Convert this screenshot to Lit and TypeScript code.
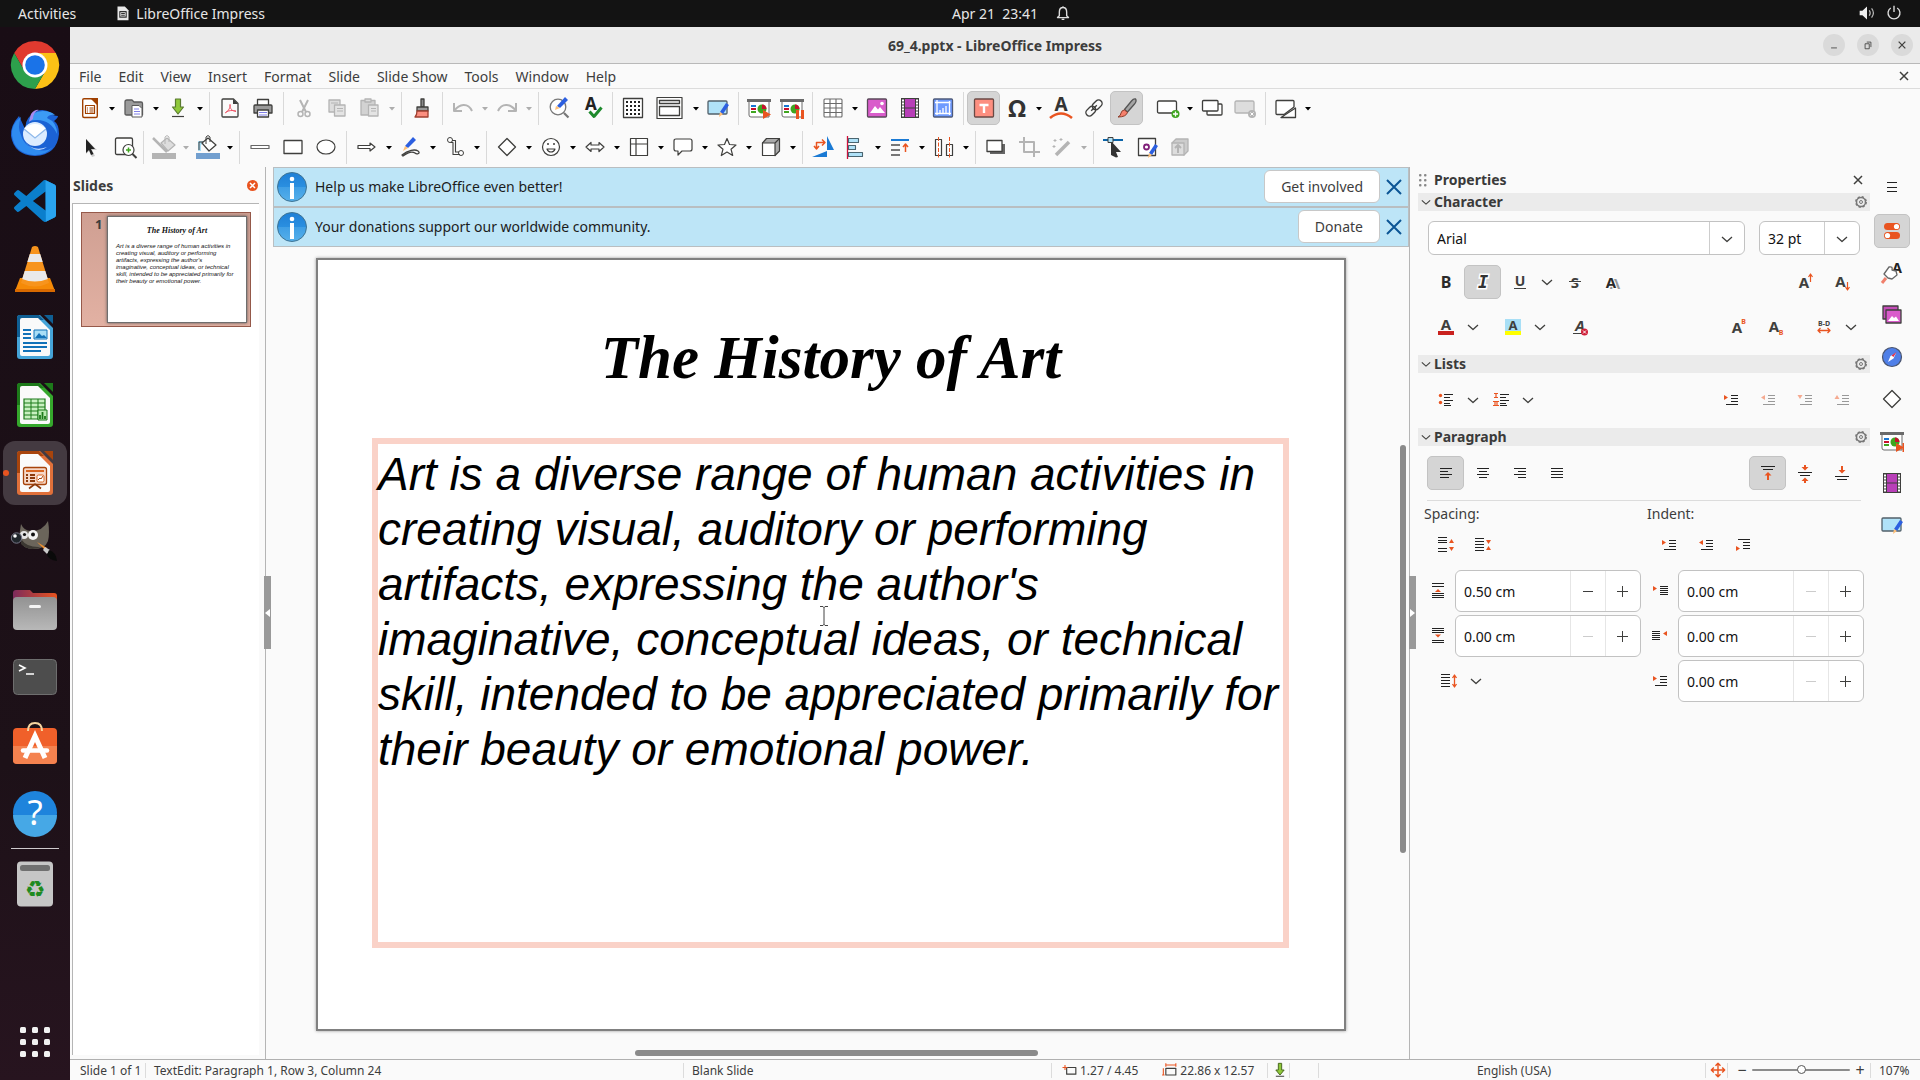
import { LitElement, html, svg, css, nothing } from "lit";
import { customElement, property } from "lit/decorators.js";
import { classMap } from "lit/directives/class-map.js";

const D = "#3f3f3d";
const G = "#b4b4b4";
const O = "#e95420";

const stroke = (d: string, c = D, f = "none", w = 1.3) =>
  svg`<path d=${d} stroke=${c} fill=${f} stroke-width=${w} stroke-linejoin="round"/>`;
const fill = (d: string, c = D) => svg`<path d=${d} fill=${c}/>`;
const glyph = (s: string, x: number, y: number, size: number, c = D, style = "") =>
  svg`<text x=${x} y=${y} font-size=${size} fill=${c} text-anchor="middle" font-weight="bold" font-style=${style || "normal"} font-family="Noto Sans, sans-serif">${s}</text>`;
const lines = (ys: number[], x1: number, x2: number, c = "#222") =>
  svg`${ys.map((y) => svg`<path d=${`M${x1} ${y}H${x2}`} stroke=${c} stroke-width="1"/>`)}`;
const pencil = (x: number, y: number) =>
  svg`<g transform=${`translate(${x} ${y})`}>${fill("M8 0l3 2-6 9-3-2z", "#2c5fe0")}${fill("M2 9l3 2-4 3z", "#ffc078")}</g>`;
const board = svg`${fill("M0 3h24v3H0z", "#6a6a6a")}${stroke("M2 6v13q0 2 2 2h18V6", "#6a6a6a", "#fff", 1)}
  ${fill("M4 9h5v2H4z", "#1976d2")}${fill("M4 12h5v2H4z", "#c8102e")}${fill("M4 15h5v2H4z", "#3fa51f")}
  <circle cx="15" cy="13" r="4.5" fill="#3fa51f"/>${fill("M15 13V8.500a4.500 4.500 0 0 1 4.500 4.500z", "#c8102e")}`;
const film = svg`${fill("M3 2h18v20H3z", D)}${fill("M7 3h10v8.500H7zM7 12.500h10V21H7z", "#b83fb8")}
  ${[3.5, 6.5, 9.5, 12.5, 15.5, 18.5].map((y) => svg`<path d=${`M4 ${y}h2v2H4zM18 ${y}h2v2h-2z`} fill="#fff"/>`)}`;
const bucket = (c: string, f: string) => svg`${stroke("M6 8l6-5 8 7-7 6z", c, f, 1.2)}${stroke("M10 9V2q2-3 4 0v5", c, "none", 1)}`;
const indent = (tri: string, c = "#222", t = O) => svg`${lines([7.5, 10.500, 13.5], 12, 19, c)}${lines([16.5], 7, 19, c)}${fill(tri, t)}`;

const ICONS: Record<string, unknown> = {
  newdoc: svg`${stroke("M6 2.700h9l4.300 5V20q0 1.500-1.500 1.500H6.200Q4.700 21.500 4.700 20V4q0-1.300 1.300-1.300z", "#a04000", "#fff", 1.400)}${fill("M12 2h8v8z", "#a04000")}${stroke("M7.500 9.500h9v8h-9z", "#a04000", "#fff", 1.200)}${stroke("M9 12h1M11.500 12h4M9 14h1M11.500 14h4M9 16h1M11.500 16h4", "#a04000", "none", 1)}`,
  open: svg`${stroke("M3 6q0-2 2-2h5l2 2h7q1.500 0 1.500 1.500V19H4.500Q3 19 3 17.500z", "#5a5a5a", "#9a9a9a")}${stroke("M10 9.500h7l3 3V21H10z", "#5a5a5a", "#fff", 1)}${stroke("M12 13h5M12 15.500h6M12 18h6", "#8080e8", "none", 1)}`,
  save: svg`${stroke("M9.500 3h5v8h3L12 18 6.500 11h3z", "#5a7a30", "#8fc93a", 1.200)}${stroke("M6 20.500h12", D, "none", 1.200)}`,
  savestate: svg`${stroke("M10 4h4v8h3L12 18 7 12h3z", "#4a6a20", "#8fc93a", 1.200)}${stroke("M7 19.500h10", D, "none", 1.200)}`,
  pdf: svg`${stroke("M5.500 3h10L20 7.500V20q0 1-1 1H5q-1 0-1-1V4q0-1 1-1z")}${fill("M15 3l5 5h-5z")}${stroke("M7 17c4-2 5.500-6 5-9M12 9c0 4 2 6 6 6.500M8 16c3-1.500 6-2 10-1", "#ee5566", "none", 1)}`,
  print: svg`${stroke("M6.500 9V3.500h11V9", D, "#fff")}${stroke("M4 9h16q1 0 1 1v7H3v-7q0-1 1-1z", D, "#9a9a9a")}${stroke("M6.500 14h11v7h-11z", D, "#fff")}${stroke("M8 16.500h8M8 19h8", "#8080e8", "none", 1)}`,
  cut: svg`${stroke("M8 4l6 12M16 4l-6 12", G, "none", 2)}<circle cx="8.500" cy="18" r="2.500" fill="none" stroke=${G} stroke-width="1.500"/><circle cx="15.500" cy="18" r="2.500" fill="none" stroke=${G} stroke-width="1.500"/>`,
  copy: svg`${stroke("M4 4h11v12H4z", G, "#ddd")}${stroke("M9.500 9H20v11H9.500z", G, "#e4e4e4")}${stroke("M12 12.500h6M12 15h6M6 7h7", G, "none", 1)}`,
  paste: svg`${stroke("M3 4.500h14V19H3z", G, "#d2d2d2")}${stroke("M7 3h6v3H7z", G, "#ddd")}${stroke("M10.500 9H20v11h-9.500z", G, "#e4e4e4")}${stroke("M13 12.500h5M13 15h5", G, "none", 1)}`,
  clone: svg`${stroke("M11 3h3v8h-3z", D, "#8a8a8a")}${stroke("M7 11h11v4H7z", D, "#9a9a9a")}${stroke("M7 15h11v6H5q2-2 2-6z", "#a04030", "#fb8f80")}`,
  undo: svg`${stroke("M3 7v8h8M3.500 14.500C8 8 17 6 21 15", G, "none", 2)}`,
  redo: svg`${stroke("M21 7v8h-8M20.500 14.500C16 8 7 6 3 15", G, "none", 2)}`,
  find: svg`<circle cx="11" cy="11" r="7.800" fill="#fff" stroke="#777" stroke-width="1.300"/>${stroke("M17 17l4.500 4.500", "#777", "none", 2.200)}${fill("M18 1l3 3-8 8-3-2z", "#2c5fe0")}${fill("M9 10l4 2-5 2z", "#ffc078")}`,
  spell: svg`${glyph("A", 11, 14, 17, "#222")}${stroke("M9.500 15.500l4.500 5 7.500-9", "#1d8a2c", "none", 3)}`,
  grid: svg`${stroke("M2.500 2.500h19v19h-19z", D, "#fff")}${[6, 10, 14, 18].map((y) => [6, 10, 14, 18].map((x) => svg`<path d=${`M${x - 1} ${y - 1}h2v2h-2z`} fill="#222"/>`))}`,
  views: svg`${stroke("M-1 1.500h25v21H-1z", D, "#fff", 1.200)}${stroke("M1.500 4.500h20v3h-20zM1.500 10.500h20v9h-20z", D, "#fff")}`,
  master: svg`${stroke("M3 5h17q1 0 1 1v11q0 1-1 1H3q-1 0-1-1V6q0-1 1-1z", "#51606a", "#b0e2f8")}${pencil(12, 7)}`,
  play: svg`${board}${fill("M16 14l8 4.500-8 4.500z", O)}`,
  pause: svg`${board}${fill("M16 14h3v9h-3zM21 14h3v9h-3z", O)}`,
  table: svg`${stroke("M4 3h16q1 0 1 1v16q0 1-1 1H4q-1 0-1-1V4q0-1 1-1zM3 7.500h18M3 12h18M3 16.500h18M9 3v18M15 3v18", "#6a6a6a", "#fff", 1.100)}`,
  image: svg`${stroke("M3.500 3h17q1 0 1 1v16q0 1-1 1h-17q-1 0-1-1V4q0-1 1-1z", "#5a4a5a", "#d95ccb")}${fill("M5 17l5-7 3 3.500 2-2.500 5 6z", "#fff")}<circle cx="17" cy="7.500" r="1.800" fill="#fff"/>`,
  film,
  chart: svg`${stroke("M3.500 3h17q1 0 1 1v16q0 1-1 1h-17q-1 0-1-1V4q0-1 1-1z", "#4f5b7a", "#6f9bff")}${stroke("M6 4v15M4 6.500h15.500M4 17.500h16M18.500 5v14M9 17v-3M12 17v-5M15 17v-7", "#fff", "none", 1.300)}`,
  textbox: svg`${stroke("M3.500 3h17q1 0 1 1v16q0 1-1 1h-17q-1 0-1-1V4q0-1 1-1z", "#6a4a45", "#fd8f80")}${stroke("M7.500 9h9M12 9v8", "#fff", "none", 2.400)}`,
  omega: svg`${glyph("Ω", 12, 21, 24, "#333")}`,
  fontwork: svg`${glyph("A", 12, 15, 19, "#333")}${stroke("M1 22q11-9 22 0", O, "none", 2.600)}`,
  link: svg`<g transform="rotate(-45 12 12)"><rect x="2" y="8.500" width="11" height="7" rx="3.500" fill="none" stroke=${D} stroke-width="1.400"/><rect x="11" y="8.500" width="11" height="7" rx="3.500" fill="none" stroke=${D} stroke-width="1.400"/><path d="M8 12h8" stroke=${D} stroke-width="1.300"/></g>`,
  brush: svg`${stroke("M20.500 3q1.500 2-1 5l-7 8-3-2.500 7-8.500q2-2.500 4-2z", "#555", "#a5a5a5")}${stroke("M9.500 14l3 2.500Q11 21 3 21q3-1.500 3-4 .800-3 3.500-3z", "#8c3d2a", "#f5806c", 1)}`,
  newslide: svg`${stroke("M3 5h16q1.500 0 1.500 1.500v9q0 1.500-1.500 1.500H3q-1.500 0-1.500-1.500v-9Q1.500 5 3 5z", D, "#fff")}<circle cx="19.500" cy="18" r="4" fill="#3fa51f"/>${stroke("M17 18h5M19.500 15.500v5", "#fff", "none", 1.300)}`,
  dupslide: svg`${stroke("M8 8h13q1 0 1 1v9q0 1-1 1H8q-1 0-1-1V9q0-1 1-1z", D, "#fff")}${stroke("M3.500 4.500H17q1 0 1 1V14q0 1-1 1H3.500q-1 0-1-1V5.500q0-1 1-1z", D, "#fff")}`,
  delslide: svg`${stroke("M3.500 5h16q1.500 0 1.500 1.500v9q0 1.500-1.500 1.500h-16Q2 17 2 15.500v-9Q2 5 3.500 5z", G, "#ddd")}<circle cx="19" cy="18" r="4" fill=${G}/>${stroke("M17.500 16.500l3 3M20.500 16.500l-3 3", "#fff", "none", 1)}`,
  layout: svg`${stroke("M3 4.500h16q1 0 1 1V11l-10 7.500H3q-1 0-1-1V5.500q0-1 1-1z", D, "#fff")}${stroke("M7 21.500L21.500 12v9.500z", D, "#fff")}`,
  pointer: svg`${fill("M8 4l11 11h-5l3 6-3 1-3-6-3 3z", "#ccc")}${fill("M8 4l9 10h-4l2.500 5-2.500 1-2-5-3 3z", "#222")}`,
  zoom: svg`${stroke("M6 3h14q1.500 0 1.500 1.500V18q0 1.500-1.500 1.500H6Q4.500 19.500 4.500 18V4.500Q4.500 3 6 3z", D, "#fff")}<circle cx="17.500" cy="15" r="5.500" fill="#fff" stroke=${D} stroke-width="1.200"/>${stroke("M21.500 19l4 4", D, "none", 2)}${stroke("M15 15h5M17.500 12.500v5", "#3fa51f", "none", 1.500)}`,
  linecolor: svg`<g transform="translate(3 0)">${bucket(G, "#ddd")}</g>${stroke("M1 3l14 14", G, "none", 2.500)}${fill("M0 18h24v6H0z", G)}`,
  fillcolor: svg`${fill("M2 16V6h7l-4 4v6z", "#a8ddf4")}${stroke("M3 15V7h4", D, "none", 1)}${bucket(D, "#fff")}${fill("M0 18h24v6H0z", "#729fcf")}`,
  line: stroke("M3 10.500h18v3H3z", "#666", "#fff", 1.200),
  rect: stroke("M3.500 5.500h17q.500 0 .500.500v12.500H3V6q0-.500.500-.500z", D, "#fff"),
  ellipse: svg`<ellipse cx="12" cy="12" rx="9" ry="7" fill="#fff" stroke=${D} stroke-width="1.200"/>`,
  arrow: stroke("M3 10.500h12V8l5 4-5 4v-2.500H3z", D, "#fff", 1.200),
  freeline: svg`${fill("M14 2l3 3-8 8-3-2z", "#2c5fe0")}${fill("M6 11l3 2-5 3z", "#ffc078")}${stroke("M3 20c6-5 13-6 16-4s-1 4-3 2c-3-2-8 0-12 3z", D, "none", 1.300)}`,
  connector: svg`<circle cx="7" cy="5" r="2.500" fill="#fff" stroke=${D}/><circle cx="18" cy="18" r="2.500" fill="#fff" stroke=${D}/>${stroke("M9 5.500h3.500v11.500H16M7.500 7.500h2.500v12h7", D, "none", 1.100)}`,
  diamond: stroke("M12 3.500l8.500 8.500-8.500 8.500L3.500 12z", D, "#fff"),
  smiley: svg`<circle cx="12" cy="12" r="8.500" fill="#fff" stroke=${D} stroke-width="1.200"/><path d="M9 8v2M15 8v2" stroke=${D} stroke-width="1.500"/>${stroke("M8 14h8q-1 3-4 3t-4-3z", D, "none", 1.200)}`,
  dblarrow: stroke("M3 12l5-4.500V10h8V7.500l5 4.500-5 4.500V14H8v2.500z", D, "#fff", 1.200),
  flowchart: stroke("M3.500 3.500h17v17h-17zM3.500 9h17M9 3.500v17", D, "#fff", 1.200),
  callout: stroke("M5 4h14q2 0 2 2v8q0 2-2 2h-8l-4 4v-4H5q-2 0-2-2V6q0-2 2-2z", D, "#fff", 1.200),
  star: stroke("M12 3.500l2.500 6 6.500.500-5 4.200 1.700 6.300-5.700-3.500-5.700 3.500L8 14.200 3 10l6.500-.500z", D, "#fff", 1.200),
  cube: svg`${stroke("M3.500 8l4-4.500h13V16L16 20.500z", D, "#aaa", 1.200)}${stroke("M3.500 8H16v12.500H3.500zM16 8l4.500-4.500", D, "#fff", 1.200)}`,
  rotate: svg`${fill("M16 1l7 14h-7zM1 22l15-6v6z", "#1a7ad4")}${stroke("M5.500 13V7.500H13M11 4.500l3 3-3 3M3 11l2.500 3L8 11", O, "none", 1.500)}`,
  align: svg`${stroke("M3.500 1v23", "#d0103a", "none", 1.300)}${stroke("M4.500 3.500h10v4h-10zM4.500 10.500h7v4h-7zM4.500 17.500h14v4h-14z", "#4a6570", "#b0e2f8", 1.100)}`,
  arrange: svg`${fill("M3 4h18v2H3z", "#1a7ad4")}${stroke("M3 10h9M3 15h9M3 20h9", "#777", "none", 1.800)}${stroke("M17.500 17v-7M15 12l2.500-3 2.500 3", O, "none", 1.500)}`,
  distribute: svg`${stroke("M3.500 4.500h6v16h-6zM14.500 9.500h6v11h-6z", D, "#fff", 1.200)}<path d="M6.500 2v21M17.500 2v21" stroke=${O} stroke-dasharray="4 1.500"/>`,
  shadow: svg`${fill("M6 9h15v10H6z", "#666")}${stroke("M3 5.500h15v11H3z", D, "#fff")}`,
  crop: stroke("M2 7h15v15M7 2v15h16", G, "none", 2),
  wand: svg`${stroke("M19 7L6 20", G, "none", 3.500)}${stroke("M5 4v3M3.500 5.500h3M11 3v3M9.500 4.500h3M4 10v3M2.500 11.500h3", G, "none", 1)}`,
  points: svg`${fill("M1 4h20v2H1z", "#0a64a8")}${fill("M9 6l10 11h-5l2 5-2 .500L9 20z", "#333")}${stroke("M6 2.500h5v5H6z", D, "#b0e2f8", 1)}`,
  glue: svg`${stroke("M3.500 3.500h17v17h-17z", D, "#fff")}<circle cx="11.500" cy="12" r="2.500" fill="none" stroke="#80207a" stroke-width="1.800"/>${pencil(12, 9)}`,
  extrude: svg`${stroke("M4 8l4-4h12v12l-4 4z", G, "#ccc")}${stroke("M4 8h12v12H4z", G, "#ddd")}${stroke("M10 18v-7M7 13l3-3 3 3", G, "none", 2)}`,
  bold: glyph("B", 12, 17.5, 16, "#2a2a2a"),
  italic: svg`<text x="12" y="18" font-size="17" fill="#333" stroke="#fff" stroke-width="3" paint-order="stroke" text-anchor="middle" font-weight="bold" font-style="italic" font-family="DejaVu Sans Mono">I</text>`,
  underline: svg`${glyph("U", 12, 15.5, 14)}${lines([18.5], 6, 18, D)}`,
  strike: svg`${glyph("S", 12, 17.5, 15)}${lines([12.5], 6, 18, "#fff")}${lines([11.5], 6, 18, D)}`,
  ashadow: svg`${glyph("A", 15, 19, 15, "#999")}<text x="11" y="17.500" font-size="15" fill="#2a2a2a" stroke="#fff" stroke-width="2" paint-order="stroke" text-anchor="middle" font-weight="bold" font-family="Noto Sans, sans-serif">A</text>`,
  grow: svg`${glyph("A", 11, 18, 15)}${stroke("M17.500 12V5M15.500 7l2-3 2 3", O, "none", 1.200)}`,
  shrink: svg`${glyph("A", 10.5, 17, 15)}${stroke("M17.500 12v7M15.500 17l2 3 2-3", O, "none", 1.200)}`,
  acolor: svg`${glyph("A", 12, 15, 15)}${fill("M4 16h16v4H4z", "#c9211e")}`,
  ahigh: svg`${fill("M4 4h16v12H4z", "#a8dff6")}${glyph("A", 12, 15, 13)}${fill("M4 16h16v4H4z", "#ffff00")}`,
  aclear: svg`${glyph("A", 12, 16, 15, D, "italic")}${lines([18.5], 5, 15, D)}<circle cx="16.500" cy="17" r="3.500" fill="#d0203a"/>${stroke("M15 15.500l3 3M18 15.500l-3 3", "#fff", "none", 1)}`,
  sup: svg`${glyph("A", 11, 18, 15)}${glyph("B", 17.5, 9, 7, O)}`,
  sub: svg`${glyph("A", 11, 17, 15)}${glyph("B", 18, 20, 7, O)}`,
  spacing: svg`${glyph("B-D", 12, 10.500, 7)}${stroke("M6 15.500h12M8.500 13L6 15.500 8.500 18M15.500 13l2.500 2.500-2.500 2.500", O, "none", 1.300)}`,
  bullets: svg`<circle cx="6.500" cy="7.500" r="1.700" fill=${O}/><circle cx="6.500" cy="14.500" r="1.700" fill=${O}/>${lines([6.5, 12.500], 10, 19)}${lines([9.5, 15.500], 10, 16)}${lines([17.5], 10, 17)}`,
  numbers: svg`${stroke("M5 5.500h4M7 5.500v4M5 9.500h4M4 13.500h6M6 13.500v4M8 13.500v4M4 17.500h6", O, "none", 1.200)}${lines([6.5, 12.500], 11, 20)}${lines([9.5, 15.500], 11, 17)}${lines([17.5], 11, 18)}`,
  demote: indent("M5 7l4 2.500L5 12z"),
  promote: indent("M9 7L5 9.500 9 12z", "#999", "#f5aa90"),
  down: indent("M4.500 7h5L7 11z", "#999", "#f5aa90"),
  up: indent("M4.500 11h5L7 7z", "#999", "#f5aa90"),
  pdemote: indent("M5 7l4 2.500L5 12z"),
  ppromote: indent("M9 7L5 9.500 9 12z"),
  hanging: svg`${lines([6.5], 7, 19)}${lines([9.5, 12.500, 15.500], 12, 19)}${fill("M5 13l4 2.500L5 18z", O)}`,
  left: svg`${lines([7.5, 13.5], 6, 18)}${lines([10.5], 6, 14)}${lines([16.5], 6, 15)}`,
  center: svg`${lines([7.5, 13.5], 6, 18)}${lines([10.5, 16.500], 8, 16)}`,
  right: svg`${lines([7.5, 13.5], 6, 18)}${lines([10.5, 16.500], 10, 18)}`,
  justify: lines([7.5, 10.500, 13.5, 16.5], 6, 18),
  vtop: svg`${lines([5.5], 5, 19)}${lines([8.5], 7, 17)}${stroke("M12 19v-6", O, "none", 2)}${fill("M8.500 14.500h7L12 11z", O)}`,
  vmid: svg`${lines([11.5], 5, 19)}${lines([14.5], 7, 17)}${fill("M11 4h2v2h2.500L12 9.500 8.500 6H11zM11 22h2v-2h2.500L12 16.500 8.500 20H11z", O)}`,
  vbot: svg`${lines([15.5], 5, 19)}${lines([18.5], 7, 17)}${stroke("M12 5v5", O, "none", 2)}${fill("M8.500 9h7L12 12.500z", O)}`,
  incpara: svg`${lines([4.5, 7.500, 9.500, 15.500, 18.500], 4, 13)}${fill("M15 10l2.500-4 2.500 4zM15 14l2.500 4 2.500-4z", O)}`,
  decpara: svg`${lines([5.5, 8.500, 11.500, 14.500, 17.500], 4, 13)}${fill("M15 7l2.500 4 2.500-4zM15 17l2.500-4 2.500 4z", O)}`,
  above: svg`${lines([4.5, 7.500, 14.500, 16.5, 18.5], 6, 18)}${fill("M9 13l3-3 3 3z", O)}`,
  below: svg`${lines([4.5, 6.5, 8.500, 16.500, 18.5], 6, 18)}${fill("M9 10.500l3 3 3-3z", O)}`,
  before: svg`${lines([7.5, 9.500, 11.500, 13.500, 15.5], 11, 19)}${fill("M4 7l4 2.500L4 12z", O)}`,
  after: svg`${lines([7.5, 9.500, 11.500, 13.500, 15.5], 3, 11)}${fill("M18 7v5l-4-2.500z", O)}`,
  first: svg`${lines([7.5, 10.500, 13.500], 11, 18)}${lines([16.5], 6, 18)}${fill("M4 7l4 2.500L4 12z", O)}`,
  linespace: svg`${lines([5.5, 8.500, 11.500, 14.500, 17.500], 4, 13)}${stroke("M17.500 7v10M15.500 9l2-3 2 3M15.500 15l2 3 2-3", O, "none", 1.300)}`,
  burger: lines([7.5, 12.5, 16.5], 7, 17),
  toggles: svg`<rect x="4" y="4" width="16" height="7" rx="3.500" fill=${O}/><circle cx="16.500" cy="7.500" r="2.600" fill="#fff"/><rect x="4" y="13" width="16" height="7" rx="3.500" fill=${O}/><circle cx="7.500" cy="16.500" r="2.600" fill="#fff"/>`,
  styles: svg`${glyph("A", 17, 12, 14, "#222")}${stroke("M4 13l5-7q4-1 3 3l4 1 1 4-5 4-4-1z", "#666", "#fff", 1.300)}${stroke("M2 22l4-5", "#f0806c", "none", 3)}`,
  gallery: svg`${stroke("M3 3h15v13H3z", D, "#c44db8")}${stroke("M6 7h15v13H6z", D, "#d95ccb")}${fill("M8 18l4-5 2 2 2-1.500 3 4.500z", "#fff")}`,
  navigator: svg`<circle cx="12" cy="12" r="9.500" fill="#4f7fe8" stroke="#4a5570" stroke-width="1.200"/>${fill("M16 8l-2.500 5.500L8 17l2.500-6z", "#fff")}${fill("M16.500 7l-3 5-2-1.500z", "#e0304a")}`,
  transition: svg`${board}${fill("M16 14l8 4.500-8 4.500z", O)}${fill("M22.500 14h1.500v9h-1.500z", O)}`,
  x: stroke("M8 8l8 8M16 8l-8 8", D, "none", 1.500),
  gear: svg`<circle cx="12" cy="12" r="4.500" fill="none" stroke="#777" stroke-width="1.500"/><circle cx="12" cy="12" r="5.200" fill="none" stroke="#777" stroke-width="1.500" stroke-dasharray="2.200 1.900"/><circle cx="12" cy="12" r="1.500" fill="none" stroke="#777"/>`,
  chev: stroke("M7 10l5 4.500 5-4.500", D, "none", 1.300),
  tri: fill("M3 5h6L6 8.500z", "#000"),
  info: svg`<defs><linearGradient id="ig" x2="0" y2="1"><stop offset="0" stop-color="#1f7fd6"/><stop offset=".5" stop-color="#2a8fe0"/><stop offset=".5" stop-color="#3f9ee5"/><stop offset="1" stop-color="#56b0ea"/></linearGradient></defs><circle cx="15" cy="15" r="14.500" fill="url(#ig)" stroke="#3f7494"/><circle cx="15" cy="7" r="2.300" fill="#fff"/>${fill("M13 11h4v16h-4z", "#fff")}`,
  bell: svg`${stroke("M12 6q4 0 4 5v4l2 2H6l2-2v-4q0-5 4-5zM12 4.500V6M10.500 19h3", "#ddd", "none", 1.500)}`,
  volume: svg`${fill("M4 9.500h3l5-4.500v14l-5-4.500H4z", "#eee")}${stroke("M14.500 9q2 3 0 6M17 7q4 5 0 10", "#bbb", "none", 1.300)}`,
  power: stroke("M8.500 6.500a6.500 6.500 0 1 0 7 0M12 4v7", "#ddd", "none", 1.500),
  appdoc: svg`${fill("M6 5h8l4 4v11H6z", "#e8e8e8")}${stroke("M8.500 10.500h7v6h-7zM10 12.500h4M10 14.500h4", "#333", "none", 1.200)}`,
  pos: svg`${stroke("M8 9h11v8H8z", D, "none", 1.400)}${stroke("M3 9h6M6 6v6", O, "none", 1.300)}`,
  size: svg`${stroke("M7 10h12v8H7z", D, "none", 1.400)}${stroke("M7 6h12M7 4v4M19 4v4M4 10v8M2.500 18h3", O, "none", 1.300)}`,
  fit: svg`${stroke("M4 12h16M12 4v16M7 9l-3 3 3 3M17 9l3 3-3 3M9 7l3-3 3 3M9 17l3 3 3-3", O, "none", 1.700)}`,
  restore: svg`${stroke("M8.500 10.500h5v6h-5zM10.500 8.500h5v6", D, "none", 1)}`,
  min: stroke("M8.500 15.500h7", D, "none", 1),
};

const icon = (name: string, cls = "ico", box = 24) =>
  html`<svg class=${cls} viewBox=${`0 0 ${box} ${box}`} aria-hidden="true">${ICONS[name]}</svg>`;

const officeDoc = (dark: string, light: string, inner: unknown) => svg`
  <path d="M10 2h19L42 15v28q0 3-3 3H9q-3 0-3-3V5q0-3 3-3z" fill=${light}/>
  <path d="M9 2h19l5 5H10v17H6V5q0-3 3-3z" fill=${dark}/>
  <path d="M11 5h16l12 12v24q0 2-2 2H11q-2 0-2-2V7q0-2 2-2z" fill="#fafafa"/>
  <path d="M33 2h9v9z" fill=${dark}/>${inner}`;

const DOCK: { name: string; art: unknown; active?: boolean }[] = [
  { name: "Chrome", art: svg`<path d="M24 12H44.800A24 24 0 0 0 3.200 12L13.600 30A12 12 0 0 1 24 12z" fill="#e03a2f"/><path d="M34.400 30L24 48A24 24 0 0 0 44.800 12H24A12 12 0 0 1 34.400 30z" fill="#fbc116"/><path d="M13.600 30L3.200 12A24 24 0 0 0 24 48L34.400 30A12 12 0 0 1 13.600 30z" fill="#2da04c"/><circle cx="24" cy="24" r="12.500" fill="#fff"/><circle cx="24" cy="24" r="9.800" fill="#1a73e8"/>` },
  { name: "Thunderbird", art: svg`<path d="M8 7q-9 10-8 20Q3 46 24 47q22-1 24-22 0-10-5-13 4-3 4-5-5 0-7-3Q30-3 20 6q-7 6-5 16L8 7z" fill="#1b62d4"/><path d="M10 8q-4 10 0 18 3 12 18 15 8 2 14-3-8 9-20 8Q3 44 1 26 0 15 10 8z" fill="#2f8cf0"/><path d="M18 12Q20 2 32 2q8 0 12 4-6-1-8 3 10 4 10 16-8-18-28-13z" fill="#3c9bf5"/><path d="M20 5q4-5 8-4-6 2-6 9l-4 3z" fill="#a58bf0"/><circle cx="24" cy="25" r="12" fill="#dcecff"/><path d="M13 20q11-10 22 0L24 29z" fill="#fff"/><path d="M13 20l11 9 11-9" fill="none" stroke="#8fb9ea" stroke-width="1.300"/><path d="M14 33q8 10 22 5-10 8-22-5z" fill="#bcd9ff"/>` },
  { name: "Code", art: svg`<g transform="translate(3 3) scale(1.750)"><path d="M23.150 2.587L18.210.210a1.494 1.494 0 0 0-1.705.290l-9.460 8.630-4.120-3.128a.999.999 0 0 0-1.276.057L.327 7.261A1 1 0 0 0 .326 8.740L3.899 12 .326 15.260a1 1 0 0 0 .001 1.479L1.650 17.940a.999.999 0 0 0 1.276.057l4.120-3.128 9.460 8.630a1.492 1.492 0 0 0 1.704.290l4.942-2.377A1.500 1.500 0 0 0 24 20.060V3.939a1.500 1.500 0 0 0-.850-1.352zm-5.146 14.861L10.826 12l7.178-5.448v10.896z" fill="#0b7fcc"/><path d="M18 .200l5.150 2.387A1.500 1.500 0 0 1 24 3.939V20.060a1.500 1.500 0 0 1-.850 1.350L18.200 23.800z" fill="#2aa4ef"/></g>` },
  { name: "VLC", art: svg`<path d="M9 33h30l5 13H4z" fill="#f58a07"/><path d="M4 44h40v3H4z" fill="#d96a00"/><path d="M21 2q3-2 6 0l11 36q-14 7-28 0z" fill="#f7941d"/><path d="M18.800 9h10.400l2.500 8H16.300zM13.700 26h20.600l2.500 8q-13 5-25.600 0z" fill="#e9e9e9"/>` },
  { name: "Writer", art: officeDoc("#0f5f94", "#45a4d8", svg`<path d="M12 17h8M12 21h8M12 25h8M12 30h24M12 34h24M12 38h18" stroke="#1272b8" stroke-width="2"/><path d="M23 17h13v9H23z" fill="#a9def6" stroke="#1272b8"/><path d="M24 25l4-5 3 3 2-1 3 3z" fill="#1272b8"/>`) },
  { name: "Calc", art: officeDoc("#1d7a1a", "#35a82c", svg`<path d="M13 18h21v20H13z" fill="#c8f0c0" stroke="#1d7a1a" stroke-width="1.200"/><path d="M13 22h21M13 26h21M13 30h21M13 34h21M20 18v20M27 18v20" stroke="#1d7a1a"/><path d="M27 29h9v10h-9z" fill="#b9eab0" stroke="#1d7a1a"/><path d="M29 38v-4M31.500 38v-7M34 38v-3" stroke="#1d7a1a" stroke-width="1.800"/>`) },
  { name: "Impress", active: true, art: officeDoc("#a8440c", "#e0703a", svg`<rect x="12.500" y="18.500" width="23" height="17" rx="2" fill="#f6d8c8" stroke="#a8440c" stroke-width="1.300"/><path d="M15 22h18" stroke="#d8641f" stroke-width="2"/><path d="M15 26h2M15 29h2M15 32h2M19 26h5M19 29h5M19 32h5" stroke="#8c3a0c" stroke-width="2"/><rect x="26" y="26" width="7" height="7" rx="1.500" fill="#fff" stroke="#d8641f"/><path d="M27 31l2-2 1 1 2-3" stroke="#a8440c" fill="none"/><path d="M24 35l-6 4.500M24 35l6 4.500" stroke="#8c3a0c" stroke-width="1.600"/>`) },
  { name: "GIMP", art: svg`<path d="M10 7q3 7 10 7 12 0 17-10 2 12 0 20-3 8-14 8-12 0-14-9-1-8 1-16z" fill="#6b655b"/><path d="M10 22q6 9 20 8-12 5-20-3z" fill="#3c3832"/><circle cx="13" cy="18" r="4" fill="#e4e4e4"/><circle cx="22" cy="18" r="5" fill="#f2f2f2"/><circle cx="13.500" cy="17.500" r="1.600" fill="#111"/><circle cx="22" cy="17.500" r="2" fill="#111"/><circle cx="5.500" cy="21" r="5.200" fill="#20262b" stroke="#778"/><circle cx="4" cy="19" r="1.800" fill="#fff"/><path d="M26 25l10 6-2 2z" fill="#f09030"/><path d="M34 30l5 3-3 4-4-4z" fill="#ccc"/><path d="M38 33q7 2 8 11-8-1-10-6z" fill="#0a0a0a"/>` },
  { name: "Files", art: svg`<path d="M2 8q0-3 3-3h14l3 3h21q3 0 3 3v8H2z" fill="url(#fg)"/><defs><linearGradient id="fg"><stop offset="0" stop-color="#7c2b5c"/><stop offset="1" stop-color="#e9541f"/></linearGradient><linearGradient id="gg" x2="0" y2="1"><stop offset="0" stop-color="#929292"/><stop offset="1" stop-color="#b8b8b8"/></linearGradient></defs><rect x="2" y="12" width="44" height="33" rx="4" fill="url(#gg)"/><rect x="18" y="20" width="12" height="3" rx="1.500" fill="#f5f5f5"/>` },
  { name: "Terminal", art: svg`<rect x="2.500" y="6.500" width="43" height="35" rx="4" fill="#4d4d4d" stroke="#6e6e6e"/><path d="M8 12l6 3-6 3M15 21h8" stroke="#fff" fill="none" stroke-width="1.600"/>` },
  { name: "Software", art: svg`<rect x="2" y="7" width="44" height="36" rx="4" fill="#f0602a"/><path d="M2 25h44v14q0 4-4 4H6q-4 0-4-4z" fill="#f4824f"/><path d="M17 10q0-8 7-8t7 8" fill="none" stroke="#f7d6a0" stroke-width="2"/><path d="M14 37L24 15l10 22" stroke="#fff" stroke-width="5" fill="none"/><path d="M12 29.500h24" stroke="#fff" stroke-width="4.500" stroke-linecap="round"/>` },
  { name: "Help", art: svg`<circle cx="24" cy="24" r="22" fill="#1e84dc"/><path d="M2 26h44a22 22 0 0 1-44 0z" fill="#46a8e6"/><text x="24" y="36" font-size="35" fill="#fff" text-anchor="middle" font-family="Noto Sans">?</text>` },
];

interface Tool { i?: string; l?: string; d?: boolean; off?: boolean; on?: boolean; wide?: boolean; sep?: "s" | "gap" }
const t = (i: string, l: string, o: Partial<Tool> = {}): Tool => ({ i, l, ...o });
const S: Tool = { sep: "s" };
const dd = { d: true };

const ROW1: Tool[] = [
  t("newdoc", "New", dd), t("open", "Open", dd), t("save", "Save", dd), S,
  t("pdf", "Export as PDF"), t("print", "Print"), S,
  t("cut", "Cut", { off: true }), t("copy", "Copy", { off: true }), t("paste", "Paste", { d: true, off: true }), S,
  t("clone", "Clone Formatting"), S,
  t("undo", "Undo", { d: true, off: true }), t("redo", "Redo", { d: true, off: true }), S,
  t("find", "Find and Replace"), t("spell", "Spelling"), S,
  t("grid", "Display Grid"), t("views", "Display Views", { d: true, wide: true }), t("master", "Master Slide"), S,
  t("play", "Start from First Slide"), t("pause", "Start from Current Slide"), S,
  t("table", "Table", dd), t("image", "Image"), t("film", "Audio or Video"), t("chart", "Chart"), S,
  t("textbox", "Text Box", { on: true }), t("omega", "Special Character", dd), t("fontwork", "Fontwork"), t("link", "Hyperlink"),
  t("brush", "Show Draw Functions", { on: true }), { sep: "gap" },
  t("newslide", "New Slide", dd), t("dupslide", "Duplicate Slide"), t("delslide", "Delete Slide", { off: true }), S,
  t("layout", "Slide Layout", dd),
];
const ROW2: Tool[] = [
  t("pointer", "Select"), t("zoom", "Zoom and Pan"), S,
  t("linecolor", "Line Color", { d: true, off: true }), t("fillcolor", "Fill Color", dd), S,
  t("line", "Line"), t("rect", "Rectangle"), t("ellipse", "Ellipse"), S,
  t("arrow", "Lines and Arrows", dd), t("freeline", "Curves", dd), t("connector", "Connectors", dd), S,
  t("diamond", "Basic Shapes", dd), t("smiley", "Symbol Shapes", dd), t("dblarrow", "Block Arrows", dd), t("flowchart", "Flowchart", dd),
  t("callout", "Callouts", dd), t("star", "Stars", dd), t("cube", "3D Objects", dd), S,
  t("rotate", "Rotate"), t("align", "Align", dd), t("arrange", "Arrange", dd), t("distribute", "Distribute", dd), S,
  t("shadow", "Shadow"), t("crop", "Crop", { off: true }), t("wand", "Filter", { d: true, off: true }), S,
  t("points", "Edit Points"), t("glue", "Glue Points"), t("extrude", "Extrusion", { off: true }),
];

const BODY = [
  "Art is a diverse range of human activities in",
  "creating visual, auditory or performing",
  "artifacts, expressing the author's",
  "imaginative, conceptual ideas, or technical",
  "skill, intended to be appreciated primarily for",
  "their beauty or emotional power.",
];

const shared = css`
  * { box-sizing: border-box; }
  button, input { font: inherit; color: inherit; margin: 0; padding: 0; border: 0; background: none; }
  button { display: flex; align-items: center; justify-content: center; }
  .ico { width: 24px; height: 24px; flex: none; display: block; overflow: visible; }
  .tri { width: 12px; height: 12px; flex: none; display: block; }
`;

@customElement("tool-row")
class ToolRow extends LitElement {
  @property({ attribute: false }) tools: Tool[] = [];
  static styles = [shared, css`
    :host { display: flex; align-items: center; padding-left: 3px; }
    .tool { width: 33px; height: 34px; border: 1px solid transparent; border-radius: 5px; flex: none; }
    .wide { width: 41px; }
    .on { background: #d5d5d5; border-color: #c3c3c3; }
    .drop { width: 11px; height: 34px; flex: none; }
    .drop[disabled] { opacity: 0.3; }
    .sep { height: 33px; width: 8px; flex: none; display: flex; justify-content: center; }
    .line { width: 1px; background: #d9d9d9; }
  `];
  render() {
    return this.tools.map((x) => x.sep
      ? html`<span class="sep">${x.sep === "gap" ? nothing : html`<span class="line"></span>`}</span>`
      : html`<button class=${classMap({ tool: true, on: !!x.on, wide: !!x.wide })} aria-label=${x.l} ?disabled=${x.off}>${icon(x.i!)}</button>
        ${x.d ? html`<button class="drop" aria-label=${`${x.l} options`} ?disabled=${x.off}>${icon("tri", "tri", 12)}</button>` : nothing}`);
  }
}

@customElement("app-dock")
class AppDock extends LitElement {
  static styles = [shared, css`
    :host { display: flex; flex-direction: column; align-items: center; width: 70px; padding-top: 4px; background: linear-gradient(#190d15, #1d1118 70%, #27141f); }
    .app { width: 64px; height: 64px; margin: 2px 0; border-radius: 12px; position: relative; flex: none; }
    .app.active { background: #443a41; }
    .app.active::before { content: ""; position: absolute; left: 0; top: 29px; width: 6px; height: 6px; border-radius: 3px; background: #e95420; }
    .art { width: 48px; height: 48px; overflow: visible; }
    .rule { width: 48px; height: 1px; background: #cfcacd; margin: 1px 0; }
    .fillspace { flex: 1; }
    .grid { width: 64px; height: 64px; margin-bottom: 6px; }
  `];
  render() {
    return html`
      ${DOCK.map((a) => html`<button class="app ${a.active ? "active" : ""}" aria-label=${a.name}><svg class="art" viewBox="0 0 48 48">${a.art}</svg></button>`)}
      <span class="rule"></span>
      <button class="app" aria-label="Trash"><svg class="art" viewBox="0 0 48 48"><rect x="6" y="1.500" width="36" height="45" rx="4" fill="#c6c6c6"/><rect x="9" y="5" width="30" height="6" rx="2.500" fill="#707070"/><text x="24" y="37" font-size="23" fill="#1f8a1f" text-anchor="middle" font-family="DejaVu Sans">♻</text></svg></button>
      <span class="fillspace"></span>
      <button class="grid" aria-label="Show Applications"><svg class="art" viewBox="0 0 48 48">${[9, 21, 33].map((y) => [9, 21, 33].map((x) => svg`<rect x=${x} y=${y} width="6" height="6" rx="1.500" fill="#f2f2f2"/>`))}</svg></button>`;
  }
}

@customElement("side-bar")
class SideBar extends LitElement {
  static styles = [shared, css`
    :host { display: flex; border-left: 1px solid #b5b5b5; width: 511px; flex: none; position: relative; }
    .deck { flex: 1; padding-left: 8px; }
    .tabs { width: 50px; display: flex; flex-direction: column; align-items: center; padding: 3px 6px 0 0; gap: 8px; }
    .tabs button { width: 36px; height: 34px; border: 1px solid transparent; border-radius: 5px; }
    .tabs .first { margin-bottom: 2px; }
    button.on, .tabs button.on { background: #d5d5d5; border-color: #c3c3c3; }
    .head { display: flex; align-items: center; height: 26px; }
    h2, h3 { font-size: 14px; line-height: 18px; font-weight: bold; margin: 0; flex: 1; color: #3a3a3a; }
    .section { display: flex; align-items: center; height: 18px; background: #ebebeb; }
    .section .ico:first-child { width: 20px; height: 20px; margin: 0 -2px; }
    .section .gear { width: 24px; height: 24px; margin: 0 -3px; }
    .row { display: flex; align-items: center; height: 34px; padding: 0 10px 0 9px; margin: 10px 0 11px; }
    .fonts { padding-left: 10px; margin-bottom: 10px; }
    .row button { width: 37px; height: 34px; border: 1px solid transparent; border-radius: 5px; flex: none; }
    .row button.on { background: #d5d5d5; border-color: #c3c3c3; }
    .row button.dd { width: 18px; }
    .row button.sp { margin-right: 12px; }
    .grow { flex: 1; }
    .combo { display: flex; height: 34px; border: 1px solid #c2c2c2; border-radius: 6px; background: #fff; overflow: hidden; }
    .combo input { flex: 1; min-width: 0; padding-left: 8px; color: #111; }
    .row .combo button { border: 0; border-left: 1px solid #cdcdcd; border-radius: 0; width: 35px; }
    .font { flex: 1; margin-right: 14px; }
    .size { width: 101px; }
    .rule { height: 1px; background: #dcdcdc; margin: -1px 9px 4px; }
    .cols { display: grid; grid-template-columns: 223px 1fr; padding-left: 6px; }
    .cap { line-height: 18px; }
    .set { display: flex; height: 34px; margin: 5px 0 8px 3px; }
    .set button { width: 37px; }
    .spin { display: flex; align-items: center; height: 42px; margin-bottom: 3px; }
    .spin > .ico { margin: 0 5px 0 2px; }
    .box { display: flex; width: 186px; height: 42px; border: 1px solid #c2c2c2; border-radius: 6px; background: #fff; }
    .box input { flex: 1; min-width: 0; padding-left: 8px; color: #111; }
    .box button { width: 35px; border-left: 1px solid #e6e6e6; }
    .box button[disabled] { color: #ccc; }
    .ls { display: flex; height: 42px; padding-left: 13px; gap: 4px; align-items: center; }
    .ls .dd { width: 22px; }
    .handle { position: absolute; left: -1px; top: 409px; width: 7px; height: 73px; background: #999; display: flex; align-items: center; }
  `];
  private b(i: string, l: string, cls = "") { return html`<button class=${cls} aria-label=${l}>${icon(i)}</button>`; }
  private section(name: string) {
    return html`<div class="section">${icon("chev")}<h3>${name}</h3><button aria-label=${`${name} options`}>${icon("gear", "gear")}</button></div>`;
  }
  private spin(i: string, label: string, v: string, low = true) {
    return html`<div class="spin">${icon(i)}<div class="box"><input aria-label=${label} .value=${v}>
      <button aria-label="Decrease" ?disabled=${low}><svg class="ico" viewBox="0 0 24 24"><path d="M7 12.500h10" stroke="currentColor"/></svg></button>
      <button aria-label="Increase"><svg class="ico" viewBox="0 0 24 24"><path d="M6 12.500h11M11.500 7v11" stroke=${D}/></svg></button></div></div>`;
  }
  render() {
    return html`
      <div class="deck">
        <div class="head"><svg width="16" height="14" viewBox="0 0 16 14">${[1, 6, 11].map((y) => [1, 6].map((x) => svg`<rect x=${x} y=${y} width="2.500" height="2.500" rx="1" fill="#888"/>`))}</svg><h2>Properties</h2>${this.b("x", "Close sidebar")}</div>
        ${this.section("Character")}
        <div class="row fonts">
          <div class="combo font"><input aria-label="Font name" .value=${"Arial"}>${this.b("chev", "Font list")}</div>
          <div class="combo size"><input aria-label="Font size" .value=${"32 pt"}>${this.b("chev", "Size list")}</div>
        </div>
        <div class="row">${this.b("bold", "Bold")}${this.b("italic", "Italic", "on")}${this.b("underline", "Underline")}${this.b("chev", "Underline styles", "dd")}${this.b("strike", "Strikethrough")}${this.b("ashadow", "Shadow")}<span class="grow"></span>${this.b("grow", "Increase size")}${this.b("shrink", "Decrease size")}</div>
        <div class="row">${this.b("acolor", "Font color")}${this.b("chev", "Font colors", "dd sp")}${this.b("ahigh", "Highlighting")}${this.b("chev", "Highlight colors", "dd sp")}${this.b("aclear", "Clear formatting")}<span class="grow"></span>${this.b("sup", "Superscript")}${this.b("sub", "Subscript", "sp")}${this.b("spacing", "Character spacing")}${this.b("chev", "Spacing options", "dd")}</div>
        ${this.section("Lists")}
        <div class="row">${this.b("bullets", "Bullets")}${this.b("chev", "Bullet styles", "dd")}${this.b("numbers", "Numbering")}${this.b("chev", "Numbering styles", "dd")}<span class="grow"></span>${this.b("demote", "Demote")}${this.b("promote", "Promote")}${this.b("down", "Move down")}${this.b("up", "Move up")}</div>
        ${this.section("Paragraph")}
        <div class="row">${this.b("left", "Align left", "on")}${this.b("center", "Center")}${this.b("right", "Align right")}${this.b("justify", "Justify")}<span class="grow"></span>${this.b("vtop", "Top", "on")}${this.b("vmid", "Middle")}${this.b("vbot", "Bottom")}</div>
        <div class="rule"></div>
        <div class="cols">
          <div><div class="cap">Spacing:</div>
            <div class="set">${this.b("incpara", "Increase paragraph spacing")}${this.b("decpara", "Decrease paragraph spacing")}</div>
            ${this.spin("above", "Spacing above", "0.50 cm", false)}${this.spin("below", "Spacing below", "0.00 cm")}
            <div class="ls">${this.b("linespace", "Line spacing")}${this.b("chev", "Line spacing options", "dd")}</div></div>
          <div><div class="cap">Indent:</div>
            <div class="set">${this.b("pdemote", "Increase indent")}${this.b("ppromote", "Decrease indent")}${this.b("hanging", "Hanging indent")}</div>
            ${this.spin("before", "Before text", "0.00 cm")}${this.spin("after", "After text", "0.00 cm")}${this.spin("first", "First line", "0.00 cm")}</div>
        </div>
      </div>
      <div class="tabs">${this.b("burger", "Sidebar settings", "first")}${this.b("toggles", "Properties", "on")}${this.b("styles", "Styles")}${this.b("gallery", "Gallery")}${this.b("navigator", "Navigator")}${this.b("diamond", "Shapes")}${this.b("transition", "Slide transition")}${this.b("film", "Animation")}${this.b("master", "Master slides")}</div>
      <div class="handle"><svg width="7" height="10"><path d="M1 1v8l5-4z" fill="#fff"/></svg></div>`;
  }
}

@customElement("app-root")
class AppRoot extends LitElement {
  static styles = [shared, css`
    :host { display: grid; grid-template-rows: 27px 1fr; height: 100vh; font: 14px "Noto Sans", "Open Sans", sans-serif; color: #3d3d3d; background: #fafafa; overflow: hidden; }
    .top { display: grid; grid-template-columns: 70px 1fr auto 1fr; background: #131313; color: #e6e6e6; align-items: center; height: 27px; padding-bottom: 1px; }
    .top .lead { grid-column: 1 / 3; display: flex; align-items: center; padding-left: 18px; }
    .top .lead .app { display: flex; align-items: center; margin-left: 36px; gap: 2px; }
    .top .tail { display: flex; align-items: center; padding-left: 14px; padding-right: 15px; gap: 5px; }
    .push { flex: 1; }
    .top .ico { width: 22px; height: 22px; }
    .shell { display: grid; grid-template-columns: 70px 1fr; min-height: 0; }
    .win { display: flex; flex-direction: column; min-width: 0; min-height: 0; }
    .title { display: grid; grid-template-columns: 1fr auto 1fr; align-items: center; height: 37px; background: #ebebeb; border-bottom: 1px solid #b9b9b9; }
    .title h1 { font-size: 14px; font-weight: bold; margin: 0; grid-column: 2; }
    .wbtns { display: flex; gap: 12px; justify-content: flex-end; padding-right: 7px; }
    .wbtns button { width: 22px; height: 22px; border-radius: 11px; background: #dadada; }
    .wbtns .ico { width: 20px; height: 20px; }
    .menu { display: flex; align-items: center; height: 25px; padding: 0 4px 0 9px; gap: 17px; border-bottom: 1px solid #dcdcdc; }
    .row1 { height: 38px; }
    .row2 { height: 40px; }
    .main { display: flex; flex: 1; min-height: 0; }
    .slides { width: 196px; flex: none; display: flex; flex-direction: column; border-right: 1px solid #b5b5b5; padding: 0 6px 4px 2px; }
    .shead { display: flex; align-items: center; height: 36px; padding-left: 1px; font-weight: bold; }
    .shead .closer { width: 11px; height: 11px; border-radius: 6px; background: #e95420; margin-right: 1px; }
    .list { flex: 1; background: #fff; border: solid #b5b5b5; border-width: 1px 0 0 1px; padding: 8px 8px; }
    .thumb { display: flex; align-items: flex-start; width: 100%; height: 115px; border: 1px solid #96594a; background: linear-gradient(#cf9f92, #e2b1a3); padding: 3px; }
    .num { width: 22px; padding-left: 10px; font-weight: bold; font-size: 13px; line-height: 16px; flex: none; text-align: left; }
    .mini { flex: 1; height: 107px; background: #fff; border: 1px solid #6e6e6e; box-shadow: 0 0 3px #555; font: italic 6px/7px "Liberation Sans"; color: #111; display: flex; flex-direction: column; text-align: left; padding: 9px 0 0 8px; }
    .mini .mt { font: italic bold 8px/9px "Liberation Serif"; text-align: center; padding-right: 8px; margin-bottom: 8px; }
    .mini span { white-space: nowrap; }
    .work { flex: 1; display: flex; flex-direction: column; padding-left: 7px; position: relative; min-width: 0; }
    .info { display: flex; align-items: center; height: 40px; background: #bde5f7; border: 1px solid #b9bec1; padding: 0 0 1px 3px; color: #1c1c1c; flex: none; }
    .info .badge { width: 30px; height: 30px; margin-right: 8px; flex: none; }
    .info span { flex: 1; }
    .info .act { height: 33px; padding: 0 16px; background: #fff; border: 1px solid #c8c8c8; border-radius: 6px; color: #3d3d3d; }
    .info .close { width: 28px; }
    .canvas { flex: 1; padding: 11px 63px 28px 43px; display: flex; min-height: 0; }
    .slide { flex: 1; background: #fff; border: 2px solid #808080; box-shadow: 0 0 3px #999; display: flex; flex-direction: column; color: #000; }
    .stitle { font: italic bold 61px/66px "Liberation Serif", serif; text-align: center; padding-top: 65px; height: 178px; margin: 0; }
    .frame { flex: 1; margin: 0 55px 81px 54px; border: 6px solid #fad2c8; padding-top: 3px; }
    .frame p { margin: 0; font: italic 46px/55px "Liberation Sans", Arial, sans-serif; white-space: nowrap; }
    .frame span { display: block; }
    .vbar { position: absolute; right: 3px; top: 278px; width: 6px; height: 408px; border-radius: 3px; background: #8a8a8a; }
    .hbar { position: absolute; left: 369px; bottom: 3px; width: 403px; height: 6px; border-radius: 3px; background: #8a8a8a; }
    .handle { position: absolute; left: -2px; top: 409px; width: 7px; height: 73px; background: #999; display: flex; align-items: center; }
    .caret { position: absolute; left: 552px; top: 438px; width: 12px; height: 22px; }
    .status { display: flex; align-items: center; height: 21px; border-top: 1px solid #b0b0b0; font-size: 12px; flex: none; }
    .status > * { display: flex; align-items: center; height: 15px; border-right: 1px solid #dcdcdc; padding-left: 8px; flex: none; white-space: nowrap; }
    .status > .bare { border: 0; }
    .status .ico { width: 20px; height: 20px; }
    .s1 { width: 76px; }
    .s3 { width: 368px; }
    .s4 { width: 216px; }
    .s5 { width: 22px; }
    .s6 { width: 29px; }
    .s7 { width: 387px; justify-content: center; }
    .s8 { width: 22px; }
    .s9 { width: 143px; }
    .s10 { width: 49px; }
    .status > .s1 { padding-left: 10px; }
    .status > .s2 { flex: 1; }
    .s4 .b { margin-left: 22px; }
    .status > .s5, .status > .s8 { padding-left: 2px; }
    .status > .s7 { padding-left: 4px; }
    .s9 button { width: 12px; font-size: 16px; }
    .s9 input { appearance: none; width: 98px; height: 15px; margin: 0 4px; }
    .s9 input::-webkit-slider-runnable-track { height: 2px; background: #8c8c8c; border-radius: 1px; }
    .s9 input::-webkit-slider-thumb { appearance: none; width: 9px; height: 9px; margin-top: -4px; border-radius: 5px; border: 1px solid #555; background: #fff; }
  `];
  render() {
    const info = (text: string, act: string) => html`<div class="info">${icon("info", "badge", 30)}<span>${text}</span><button class="act">${act}</button><button class="close" aria-label="Dismiss"><svg class="ico" viewBox="0 0 24 24"><path d="M5 5l14 14M19 5L5 19" stroke="#0b5595" stroke-width="2"/></svg></button></div>`;
    return html`
      <header class="top">
        <div class="lead"><span>Activities</span><span class="app">${icon("appdoc")}LibreOffice Impress</span></div>
        <span>Apr 21&nbsp; 23:41</span>
        <div class="tail">${icon("bell")}<span class="push"></span>${icon("volume")}${icon("power")}</div>
      </header>
      <div class="shell">
        <app-dock></app-dock>
        <div class="win">
          <div class="title"><h1>69_4.pptx - LibreOffice Impress</h1>
            <div class="wbtns"><button aria-label="Minimize">${icon("min")}</button><button aria-label="Restore">${icon("restore")}</button><button aria-label="Close">${icon("x")}</button></div></div>
          <nav class="menu">${["File", "Edit", "View", "Insert", "Format", "Slide", "Slide Show", "Tools", "Window", "Help"].map((m) => html`<button>${m}</button>`)}<span class="push"></span><button aria-label="Close document">${icon("x")}</button></nav>
          <tool-row class="row1" .tools=${ROW1}></tool-row>
          <tool-row class="row2" .tools=${ROW2}></tool-row>
          <div class="main">
            <section class="slides">
              <div class="shead"><span>Slides</span><span class="push"></span><button class="closer" aria-label="Close slides pane"><svg width="7" height="7"><path d="M1 1l5 5M6 1L1 6" stroke="#fff" stroke-width="1.500"/></svg></button></div>
              <div class="list"><button class="thumb"><span class="num">1</span><span class="mini"><span class="mt">The History of Art</span>${BODY.map((l) => html`<span>${l}</span>`)}</span></button></div>
            </section>
            <section class="work">
              ${info("Help us make LibreOffice even better!", "Get involved")}
              ${info("Your donations support our worldwide community.", "Donate")}
              <div class="canvas"><article class="slide"><h2 class="stitle">The History of Art</h2><div class="frame"><p>${BODY.map((l) => html`<span>${l}</span>`)}</p></div></article></div>
              <div class="vbar"></div><div class="hbar"></div>
              <div class="handle"><svg width="7" height="10"><path d="M6 1v8L1 5z" fill="#fff"/></svg></div>
              <svg class="caret" viewBox="0 0 12 22"><path d="M2 1.500h3l1 1 1-1h3M6 2v18M2 20.500h3l1-1 1 1h3" stroke="#fff" stroke-width="3" fill="none"/><path d="M2 1.500h3l1 1 1-1h3M6 2v18M2 20.500h3l1-1 1 1h3" stroke="#444" fill="none"/></svg>
            </section>
            <side-bar></side-bar>
          </div>
          <footer class="status">
            <span class="s1">Slide 1 of 1</span><span class="s2">TextEdit: Paragraph 1, Row 3, Column 24</span><span class="s3">Blank Slide</span>
            <span class="s4">${icon("pos")}<span>1.27 / 4.45</span>${icon("size", "ico b")}<span>22.86 x 12.57</span></span>
            <span class="s5">${icon("savestate")}</span><span class="s6"></span><span class="s7">English (USA)</span><span class="s8">${icon("fit")}</span>
            <span class="s9"><button aria-label="Zoom out">−</button><input type="range" min="0" max="100" value="50" aria-label="Zoom"><button aria-label="Zoom in">+</button></span>
            <span class="s10 bare">107%</span>
          </footer>
        </div>
      </div>`;
  }
}
